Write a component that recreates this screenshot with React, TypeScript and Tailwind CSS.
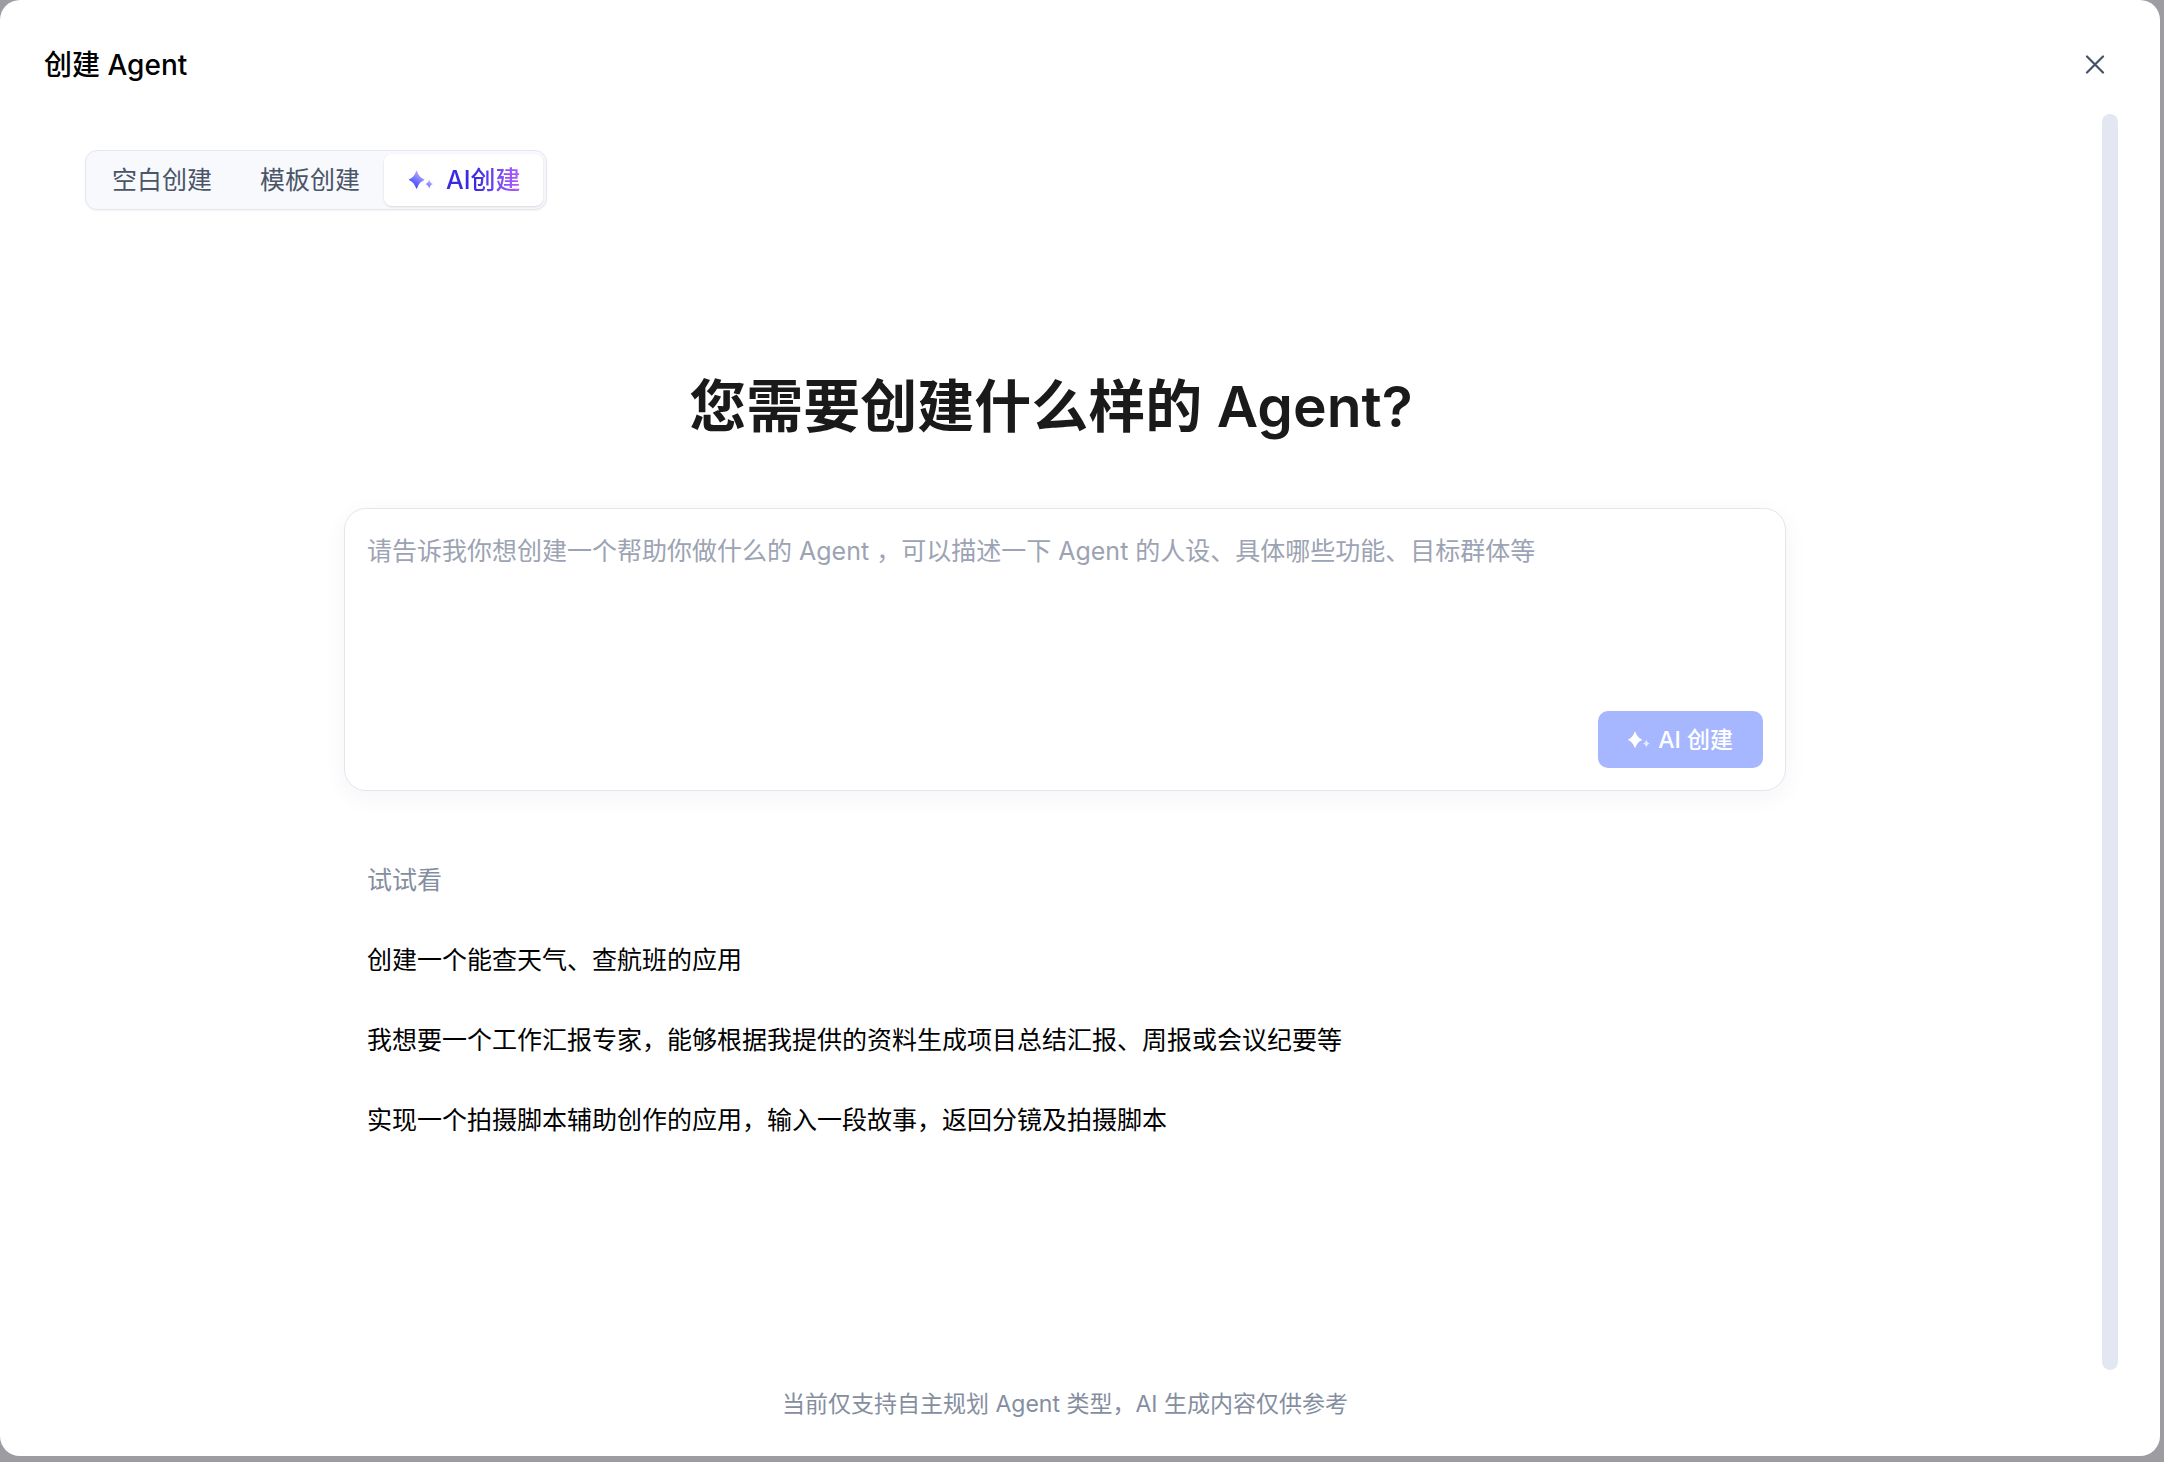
import { useState } from "react";

const TABS = [
  { id: "blank", label: "空白创建" },
  { id: "template", label: "模板创建" },
  { id: "ai", label: "AI创建" },
];

const EXAMPLES = [
  "创建一个能查天气、查航班的应用",
  "我想要一个工作汇报专家，能够根据我提供的资料生成项目总结汇报、周报或会议纪要等",
  "实现一个拍摄脚本辅助创作的应用，输入一段故事，返回分镜及拍摄脚本",
];

function SparkleIcon({ className, fill, smallOpacity }: { className: string; fill: string; smallOpacity: number }) {
  return (
    <svg className={className} viewBox="0 0 24 20" fill="none" aria-hidden="true">
      <defs>
        <linearGradient id="sparkle" x1="0.2" y1="1" x2="0.8" y2="0">
          <stop offset="0.2" stopColor="#4a52ff" />
          <stop offset="0.9" stopColor="#b9a8ff" />
        </linearGradient>
      </defs>
      <path d="M7.1 1.2Q7.6 0.2 8.1 1.2C9.6 5.2 11 7.4 14.9 9.2Q15.9 9.7 14.9 10.2C11 12 9.6 14.4 8.1 18.2Q7.6 19.2 7.1 18.2C5.6 14.4 4.2 12 0.4 10.2Q-0.6 9.7 0.4 9.2C4.2 7.4 5.6 5.2 7.1 1.2Z" fill={fill} />
      <path d="M20.2 9.4C20.8 11.8 21.6 13 24 14C21.6 15 20.8 16.2 20.2 18.6C19.6 16.2 18.8 15 16.4 14C18.8 13 19.6 11.8 20.2 9.4Z" fill={fill} opacity={smallOpacity} />
    </svg>
  );
}

export default function App() {
  const [tab, setTab] = useState("ai");
  const [prompt, setPrompt] = useState("");

  return (
    <div className="flex min-h-screen bg-[#9c9ca1] pr-1 pb-1.5 font-['Inter','Noto_Sans_CJK_SC',sans-serif]">
      <div role="dialog" aria-labelledby="dialog-title" className="flex min-w-0 flex-1 flex-col rounded-[20px] bg-white">
        {/* Header */}
        <header className="flex h-[114px] items-center justify-between pt-4 pr-[53px] pb-0 pl-11">
          <h1 id="dialog-title" className="text-[28px] leading-10 font-medium text-black">创建 Agent</h1>
          <button type="button" aria-label="关闭" className="flex size-6 items-center justify-center text-[#475069]">
            <svg className="size-5" viewBox="0 0 20 20" fill="none" stroke="currentColor" strokeWidth="2.2" strokeLinecap="round">
              <path d="M2 1.5L18 17.5M18 1.5L2 17.5" />
            </svg>
          </button>
        </header>

        <div className="flex flex-1 pr-[42px]">
          <main className="flex min-w-0 flex-1 flex-col pt-9 pr-[57px] pl-[85px]">
            {/* Tabs */}
            <div role="tablist" className="flex h-[60px] items-stretch self-start rounded-xl border border-[#e4e7ee] bg-[#f8f9fd] py-[3px] pr-[3px] pl-0.5 shadow-xs">
              {TABS.map(t => (
                <button
                  key={t.id}
                  type="button"
                  role="tab"
                  aria-selected={tab === t.id}
                  onClick={() => setTab(t.id)}
                  className={
                    tab === t.id
                      ? "flex items-center rounded-lg bg-white pr-[22px] pl-[25px] text-[25px] leading-9 font-medium text-[#3a2be2] shadow-sm"
                      : "flex items-center rounded-lg px-6 text-[25px] leading-9 text-[#4b5568]"
                  }
                >
                  {t.id === "ai" && <SparkleIcon className="mr-[13px] h-5 w-6" fill="url(#sparkle)" smallOpacity={0.8} />}
                  <span className={tab === t.id ? "bg-linear-to-r from-[#3a2be2] from-40% to-[#b55cff] bg-clip-text text-transparent" : ""}>{t.label}</span>
                </button>
              ))}
            </div>

            <h2 className="mt-[157px] pr-7 text-center text-[57px] leading-[80px] font-semibold text-[#1a1a1a]">您需要创建什么样的 Agent?</h2>

            {/* Prompt box */}
            <div className="mx-auto mt-[61px] w-full max-w-[1442px]">
              <form
                onSubmit={e => e.preventDefault()}
                className="flex flex-col rounded-[22px] border border-[#e3e6ef] bg-white p-[22px] shadow-[0_6px_24px_rgba(30,40,90,0.05)]"
              >
                <textarea
                  aria-label="Agent 描述"
                  value={prompt}
                  onChange={e => setPrompt(e.target.value)}
                  placeholder="请告诉我你想创建一个帮助你做什么的 Agent ，可以描述一下 Agent 的人设、具体哪些功能、目标群体等"
                  className="h-[180px] w-full resize-none text-[25px] leading-10 text-black outline-none placeholder:text-[#9ca3b3]"
                />
                <button type="submit" className="flex h-[57px] items-center self-end rounded-[10px] bg-[#a6b7ff] px-[30px] text-[23px] leading-8 font-medium text-white">
                  <SparkleIcon className="mr-2 h-[18px] w-[22px]" fill="#fff" smallOpacity={0.7} />
                  AI 创建
                </button>
              </form>

              <section aria-labelledby="examples-title" className="mt-[69px] flex flex-col items-start gap-10 px-[23px] text-[25px] leading-10 text-black">
                <h3 id="examples-title" className="text-[#858e9f]">试试看</h3>
                {EXAMPLES.map(text => (
                  <button key={text} type="button" onClick={() => setPrompt(text)} className="text-left">{text}</button>
                ))}
              </section>
            </div>
          </main>

          <div className="w-4 rounded-full bg-[#e2e7f1]" aria-hidden="true" />
        </div>

        <footer className="h-[86px] pt-4 pr-[99px] pl-[69px] text-center text-[23px] leading-9 text-[#858e9f]">
          当前仅支持自主规划 Agent 类型，AI 生成内容仅供参考
        </footer>
      </div>
    </div>
  );
}
